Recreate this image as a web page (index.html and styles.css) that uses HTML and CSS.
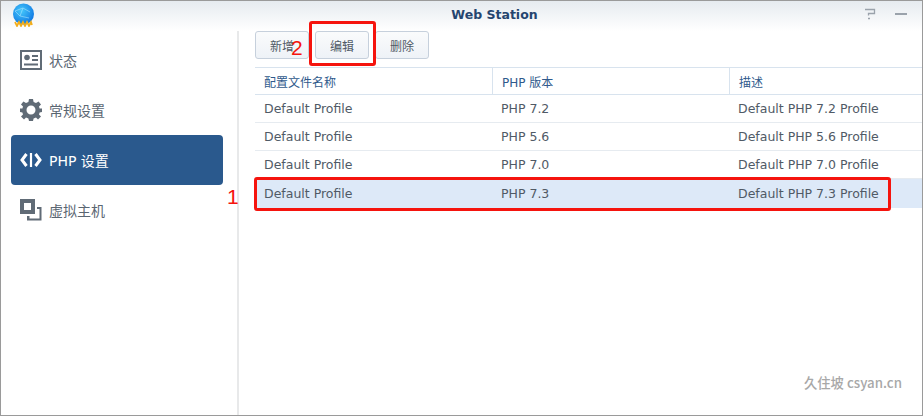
FILE: index.html
```html
<!DOCTYPE html>
<html lang="zh">
<head>
<meta charset="utf-8">
<title>Web Station</title>
<link rel="stylesheet" href="styles.css">
</head>
<body>
<div class="window">
  <header class="titlebar">
    <svg class="app-logo" width="24" height="24" viewBox="0 0 24 24">
      <defs>
        <radialGradient id="globe" cx="0.4" cy="0.35" r="0.75">
          <stop offset="0" stop-color="#45c8fb"/>
          <stop offset="1" stop-color="#0a6fe0"/>
        </radialGradient>
      </defs>
      <circle cx="12.500" cy="11" r="10.500" fill="url(#globe)"/>
      <path d="M4 8 L12 5 L19 9 M12 5 L9 13 L18 15 M9 13 L4 8" fill="none" stroke="#a8e2ff" stroke-width=".6"/>
      <path d="M4 19 L6 23 L8 19 L10 23 L12 19 L14 23 L16 19 L18 23 L20 19 L21 22" fill="none" stroke="#f2ad1a" stroke-width="1.700"/>
    </svg>
    <h1 class="title">Web Station</h1>
    <div class="win-controls">
      <svg width="12" height="12" viewBox="0 0 12 12"><path d="M1 1.500H10.500V5.500H4.500V7.500M4 10.500H6" fill="none" stroke="#9aa2ab" stroke-width="1.300"/></svg>
      <svg width="12" height="12" viewBox="0 0 12 12"><path d="M0 6H12" stroke="#9aa2ab" stroke-width="2"/></svg>
    </div>
  </header>
  <div class="body">
    <nav class="sidebar">
      <a class="nav-item">
        <svg class="nav-icon" width="22" height="20" viewBox="0 0 22 20"><path fill-rule="evenodd" d="M0 0H22V20H0ZM2 2V18H20V2Z" fill="#606b76"/><circle cx="7" cy="7.500" r="2.800" fill="#606b76"/><path d="M12 5H18V7H12ZM12 9H18V11H12ZM4 13.500H18V15.500H4Z" fill="#606b76"/></svg>
        <span>状态</span>
      </a>
      <a class="nav-item">
        <svg class="nav-icon" width="22" height="22" viewBox="0 0 22 22"><path fill-rule="evenodd" d="M9 0H13L13.600 3 16 4 18.600 2.400 21 5.500 19 7.600 19.600 9.500 22 9.500V13L19.600 13.500 19 15.500 21 17.500 18 20.600 16 18.600 13.600 19.600 13 22H9L8.400 19.600 6 18.600 4 20.600 1 17.500 3 15.500 2.400 13.500 0 13V9.500L2.400 9.500 3 7.600 1 5.500 3.400 2.400 6 4 8.400 3ZM11 6.500A4.500 4.500 0 1 0 11 15.500 4.500 4.500 0 1 0 11 6.500Z" fill="#606b76"/></svg>
        <span>常规设置</span>
      </a>
      <a class="nav-item active">
        <svg class="nav-icon" width="22" height="16" viewBox="0 0 22 16"><path d="M6.500 2 2 8 6.500 14M15.500 2 20 8 15.500 14" fill="none" stroke="#fff" stroke-width="3"/><path d="M11 1V15" stroke="#fff" stroke-width="2.200"/></svg>
        <span>PHP 设置</span>
      </a>
      <a class="nav-item">
        <svg class="nav-icon" width="22" height="22" viewBox="0 0 22 22"><path fill-rule="evenodd" d="M0 0H15V15H0ZM4 4V11H11V4Z" fill="#606b76"/><path d="M17 8H21.500V21.500H7V17H9.500V19.500H19.500V10H17Z" fill="#606b76"/></svg>
        <span>虚拟主机</span>
      </a>
    </nav>
    <main class="content">
      <div class="toolbar">
        <button class="btn">新增</button>
        <button class="btn">编辑</button>
        <button class="btn">删除</button>
      </div>
      <div class="table">
        <div class="row head"><div>配置文件名称</div><div>PHP 版本</div><div>描述</div></div>
        <div class="row"><div>Default Profile</div><div>PHP 7.2</div><div>Default PHP 7.2 Profile</div></div>
        <div class="row"><div>Default Profile</div><div>PHP 5.6</div><div>Default PHP 5.6 Profile</div></div>
        <div class="row"><div>Default Profile</div><div>PHP 7.0</div><div>Default PHP 7.0 Profile</div></div>
        <div class="row selected"><div>Default Profile</div><div>PHP 7.3</div><div>Default PHP 7.3 Profile</div></div>
      </div>
    </main>
  </div>
  <div class="mark mark-row"></div>
  <div class="mark mark-btn"></div>
  <span class="num num-1">1</span>
  <span class="num num-2">2</span>
  <span class="watermark">久住坡 csyan.cn</span>
</div>
</body>
</html>
```
FILE: styles.css
```css
* { box-sizing: border-box; }
html, body { margin: 0; height: 100%; }
body { background: #fff; font-family: "DejaVu Sans", "Noto Sans CJK SC", sans-serif; overflow: hidden; }
.window { position: relative; width: 923px; height: 416px; border: 1px solid #9a9a9a; display: flex; flex-direction: column; background: #fff; }
.titlebar { height: 30px; flex: none; display: flex; align-items: flex-start; justify-content: center; position: relative; padding: 6px 0 0 66px; background: linear-gradient(#e6ebf0, #ffffff); }
.app-logo { position: absolute; left: 10px; top: 2px; }
.title { margin: 0; font: 700 12.500px/1.2 "DejaVu Sans", sans-serif; color: #25456f; }
.win-controls { position: absolute; right: 15px; top: 7px; display: flex; gap: 19px; }
.body { flex: 1; display: flex; min-height: 0; }
.sidebar { width: 238px; flex: none; border-right: 2px solid #e8e9ea; padding: 4px 14px 0 10px; display: flex; flex-direction: column; }
.nav-item { height: 50px; display: flex; align-items: center; gap: 7px; padding-left: 9px; border-radius: 4px; color: #5a6672; font-size: 14px; }
.nav-icon { flex: none; }
.nav-item.active { background: #2a598d; color: #fff; }
.content { flex: 1; min-width: 0; padding: 0 0 0 16px; }
.toolbar { height: 36px; display: flex; align-items: flex-start; gap: 6px; }
.btn { width: 54px; height: 28px; padding: 0; border: 1px solid #c6d0dc; border-radius: 3px; background: linear-gradient(#fafbfc, #eef2f7); font: 12px "DejaVu Sans", "Noto Sans CJK SC", sans-serif; color: #505a66; }
.table { border-top: 1px solid #d8e3ee; }
.row { height: 28px; display: grid; grid-template-columns: 237px 237px 1fr; align-items: center; border-bottom: 1px solid #e6ebf0; font-size: 12.500px; color: #505a66; }
.row > div { padding-left: 9px; }
.row.head { height: 27px; font-size: 12px; color: #2f5a8c; border-bottom-color: #d8e3ee; }
.row.head > div + div { border-left: 1px solid #d8e3ee; height: 100%; display: flex; align-items: center; }
.row.selected { background: #dde9f8; height: 29px; border-bottom: 0; padding-bottom: 1px; }
.mark { position: absolute; border: 3px solid #f5140e; border-radius: 3px; }
.mark-row { left: 253px; top: 176px; width: 637px; height: 34px; }
.mark-btn { left: 308px; top: 20px; width: 67px; height: 45px; }
.num { position: absolute; color: #f5140e; font: 21px/1 "Liberation Sans", sans-serif; }
.num-1 { left: 226px; top: 185px; }
.num-2 { left: 290px; top: 36px; }
.watermark { position: absolute; left: 803px; top: 372px; font: 500 13.300px "Noto Sans CJK SC", sans-serif; color: #a8a8a8; }
```
